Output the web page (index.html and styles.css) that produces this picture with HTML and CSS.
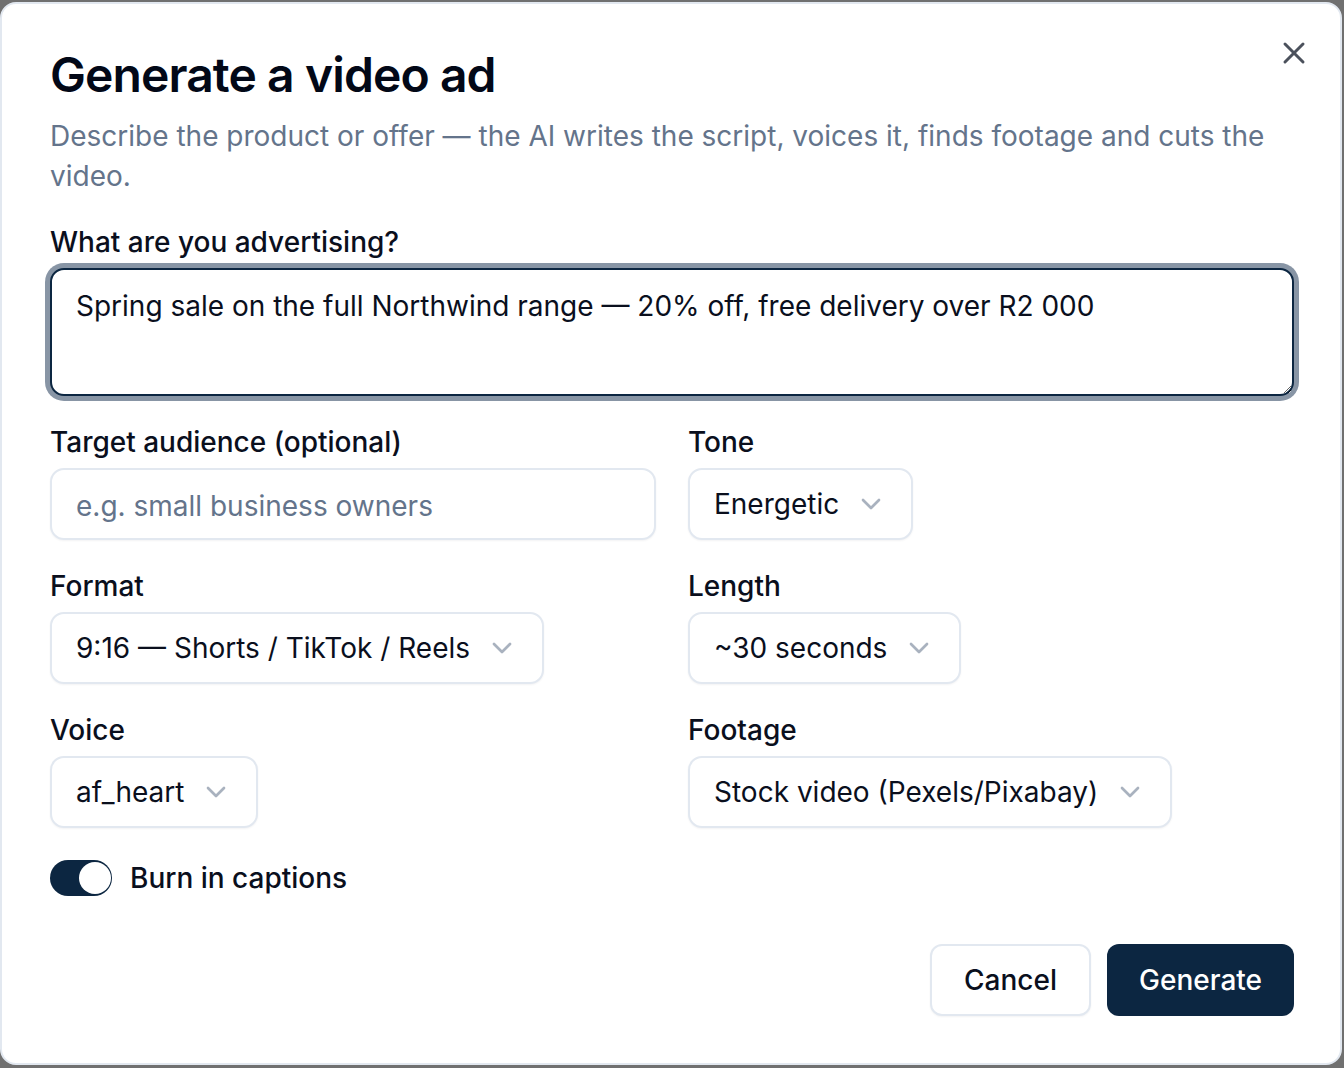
FILE: index.html
```html
<!DOCTYPE html>
<html lang="en">
<head>
    <meta charset="UTF-8">
    <meta name="viewport" content="width=device-width, initial-scale=1.0">
    <title>Generate a video ad</title>
    <link rel="stylesheet" href="styles.css">
</head>
<body>
    <div class="dialog">
        <button class="close" aria-label="Close">
            <svg viewBox="0 0 24 24" width="36" height="36" fill="none" stroke="currentColor" stroke-width="2" stroke-linecap="round" stroke-linejoin="round"><path d="M18 6 6 18"/><path d="m6 6 12 12"/></svg>
        </button>

        <h1 class="title">Generate a video ad</h1>
        <p class="description">Describe the product or offer — the AI writes the script, voices it, finds footage and cuts the video.</p>

        <div class="form">
            <div class="field">
                <label for="prompt">What are you advertising?</label>
                <textarea id="prompt" class="textarea focused">Spring sale on the full Northwind range — 20% off, free delivery over R2 000</textarea>
            </div>

            <div class="grid">
                <div class="field">
                    <label for="audience">Target audience (optional)</label>
                    <input id="audience" class="input" placeholder="e.g. small business owners">
                </div>
                <div class="field">
                    <label>Tone</label>
                    <button class="select"><span>Energetic</span><svg class="chevron" viewBox="0 0 24 24" width="32" height="32" fill="none" stroke="currentColor" stroke-width="2" stroke-linecap="round" stroke-linejoin="round"><path d="m6 9 6 6 6-6"/></svg></button>
                </div>
                <div class="field">
                    <label>Format</label>
                    <button class="select"><span>9:16 — Shorts / TikTok / Reels</span><svg class="chevron" viewBox="0 0 24 24" width="32" height="32" fill="none" stroke="currentColor" stroke-width="2" stroke-linecap="round" stroke-linejoin="round"><path d="m6 9 6 6 6-6"/></svg></button>
                </div>
                <div class="field">
                    <label>Length</label>
                    <button class="select"><span>~30 seconds</span><svg class="chevron" viewBox="0 0 24 24" width="32" height="32" fill="none" stroke="currentColor" stroke-width="2" stroke-linecap="round" stroke-linejoin="round"><path d="m6 9 6 6 6-6"/></svg></button>
                </div>
                <div class="field">
                    <label>Voice</label>
                    <button class="select"><span>af_heart</span><svg class="chevron" viewBox="0 0 24 24" width="32" height="32" fill="none" stroke="currentColor" stroke-width="2" stroke-linecap="round" stroke-linejoin="round"><path d="m6 9 6 6 6-6"/></svg></button>
                </div>
                <div class="field">
                    <label>Footage</label>
                    <button class="select"><span>Stock video (Pexels/Pixabay)</span><svg class="chevron" viewBox="0 0 24 24" width="32" height="32" fill="none" stroke="currentColor" stroke-width="2" stroke-linecap="round" stroke-linejoin="round"><path d="m6 9 6 6 6-6"/></svg></button>
                </div>
            </div>

            <div class="toggle-row">
                <span class="switch on"><span class="thumb"></span></span>
                <span class="toggle-label">Burn in captions</span>
            </div>
        </div>

        <div class="footer">
            <button class="btn btn-outline">Cancel</button>
            <button class="btn btn-primary">Generate</button>
        </div>
    </div>
</body>
</html>
```

FILE: styles.css
```css
html, body {
    margin: 0;
    background: #707070;
}

body {
    font-family: 'Inter', 'Noto Sans', sans-serif;
    color: #0a0f1d;
}

.dialog {
    position: relative;
    box-sizing: border-box;
    width: 1342px;
    height: 1063px;
    margin-top: 2px;
    padding: 43px 46px 0 48px;
    background: #fff;
    border: 2px solid #e2e8f0;
    border-radius: 16px;
}

.close {
    position: absolute;
    top: 31px;
    right: 28px;
    display: flex;
    padding: 0;
    border: none;
    background: none;
    color: #4b515c;
    cursor: pointer;
}

.title {
    margin: 0;
    font-size: 48px;
    line-height: 56px;
    font-weight: 600;
    letter-spacing: -0.9px;
    color: #020817;
}

.description {
    margin: 13px 0 0;
    font-size: 28px;
    line-height: 40px;
    color: #64748b;
}

.form {
    display: flex;
    flex-direction: column;
    gap: 26px;
    margin-top: 26px;
}

.field {
    display: flex;
    flex-direction: column;
    align-items: flex-start;
    gap: 6px;
}

.field label {
    font-size: 28px;
    line-height: 40px;
    font-weight: 500;
    color: #0a0f1d;
}

.textarea {
    box-sizing: border-box;
    width: 100%;
    height: 128px;
    padding: 16px 24px 12px;
    font-family: inherit;
    font-size: 28px;
    line-height: 40px;
    color: #0a0f1d;
    border: 2px solid #0c2641;
    border-radius: 14px;
    outline: none;
    resize: vertical;
}

.textarea.focused {
    box-shadow: 0 0 0 5px #8895a5;
}

.grid {
    display: grid;
    grid-template-columns: 1fr 1fr;
    gap: 26px 32px;
}

.input,
.select {
    box-sizing: border-box;
    height: 72px;
    font-family: inherit;
    font-size: 28px;
    color: #0a0f1d;
    background: #fff;
    border: 2px solid #e2e8f0;
    border-radius: 14px;
    box-shadow: 0 1px 2px rgba(15, 23, 42, 0.05);
}

.input {
    width: 100%;
    padding: 3px 24px 0;
    outline: none;
}

.input::placeholder {
    color: #64748b;
}

.select {
    display: inline-flex;
    align-items: center;
    gap: 16px;
    padding: 0 24px;
    cursor: pointer;
}

.chevron {
    color: #64748b;
    opacity: 0.55;
}

.toggle-row {
    display: flex;
    align-items: center;
    gap: 18px;
    height: 40px;
    padding-top: 4px;
}

.switch {
    box-sizing: border-box;
    display: inline-flex;
    align-items: center;
    width: 62px;
    height: 36px;
    padding: 0 1px;
    border-radius: 999px;
    background: #0c2641;
}

.switch.on {
    justify-content: flex-end;
}

.thumb {
    width: 32px;
    height: 32px;
    border-radius: 50%;
    background: #fff;
}

.toggle-label {
    font-size: 28px;
    line-height: 40px;
    font-weight: 500;
}

.footer {
    display: flex;
    justify-content: flex-end;
    gap: 16px;
    margin-top: 46px;
}

.btn {
    box-sizing: border-box;
    height: 72px;
    padding: 0 32px;
    font-family: inherit;
    font-size: 28px;
    font-weight: 500;
    border-radius: 12px;
    cursor: pointer;
}

.btn-outline {
    background: #fff;
    color: #0a0f1d;
    border: 2px solid #e2e8f0;
    box-shadow: 0 1px 2px rgba(15, 23, 42, 0.05);
}

.btn-primary {
    background: #0c2641;
    color: #fff;
    border: none;
}
```
